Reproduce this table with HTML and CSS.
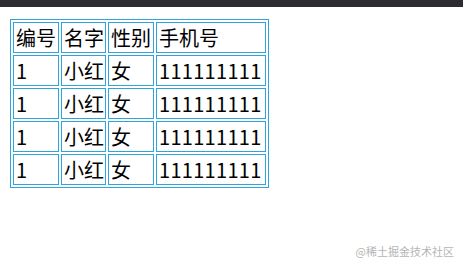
FILE: index.html
```html
<!DOCTYPE html>
<html lang="zh">
<head>
<meta charset="utf-8">
<link rel="stylesheet" href="styles.css">
</head>
<body>
<div class="topbar"></div>
<main class="content">
  <table class="grid">
    <tr><td>编号</td><td>名字</td><td>性别</td><td>手机号</td></tr>
    <tr><td>1</td><td>小红</td><td>女</td><td class="num">111111111</td></tr>
    <tr><td>1</td><td>小红</td><td>女</td><td class="num">111111111</td></tr>
    <tr><td>1</td><td>小红</td><td>女</td><td class="num">111111111</td></tr>
    <tr><td>1</td><td>小红</td><td>女</td><td class="num">111111111</td></tr>
  </table>
</main>
<div class="watermark">@稀土掘金技术社区</div>
</body>
</html>
```

FILE: styles.css
```css
html, body {
  margin: 0;
  padding: 0;
  background: #ffffff;
}
body {
  position: relative;
  width: 463px;
  height: 267px;
  overflow: hidden;
  font-family: "Noto Sans CJK SC", sans-serif;
}
.topbar {
  height: 7px;
  background: #2d2d31;
}
.content {
  padding: 12px 0 0 10px;
}
.grid {
  border: 1px solid #2fa4dc;
  border-spacing: 2px;
  border-collapse: separate;
  table-layout: fixed;
}
.grid td {
  border: 1px solid #2fa4dc;
  padding: 1px 1px 1px 2px;
  font-size: 20px;
  line-height: 27px;
  color: #000;
  white-space: nowrap;
  box-sizing: border-box;
  height: 31px;
}
.grid td.num {
  letter-spacing: 0.3px;
}
.grid td:nth-child(1) { width: 46px; }
.grid td:nth-child(2) { width: 45px; }
.grid td:nth-child(3) { width: 46px; }
.grid td:nth-child(4) { width: 110px; }
.watermark {
  position: absolute;
  right: 9px;
  bottom: 9px;
  font-size: 11px;
  color: #b5b5b5;
  font-family: "Noto Sans CJK SC", sans-serif;
  line-height: 14px;
}
```
